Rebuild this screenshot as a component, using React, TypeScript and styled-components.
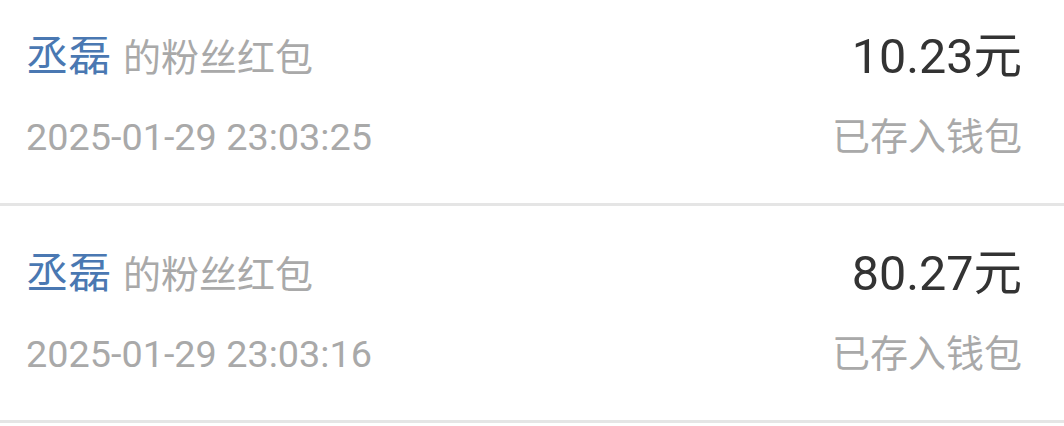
import React from "react";
import styled, { createGlobalStyle } from "styled-components";

const GlobalStyle = createGlobalStyle`
  html, body { margin: 0; padding: 0; background: #ffffff; overflow: hidden; }
  body { font-family: Roboto, "Noto Sans CJK SC", sans-serif; }
`;

const Viewport = styled.div`
  width: 1064px;
  height: 426px;
  overflow: hidden;
  background: #ffffff;
`;

const List = styled.div`
  display: flex;
  flex-direction: column;
  margin-top: -11px;
`;

const Row = styled.div`
  display: flex;
  justify-content: space-between;
  box-sizing: border-box;
  height: 217px;
  padding: 38px 42px 0 26px;
  border-bottom: 3px solid #e5e5e5;
`;

const Column = styled.div<{ $align: "left" | "right" }>`
  display: flex;
  flex-direction: column;
  align-items: ${(p) => (p.$align === "left" ? "flex-start" : "flex-end")};
`;

const TopLine = styled.div`
  display: flex;
  align-items: baseline;
  height: 60px;
  line-height: 60px;
  white-space: nowrap;
`;

const BottomLine = styled.div`
  margin-top: 25px;
  height: 50px;
  line-height: 50px;
  white-space: nowrap;
`;

const Name = styled.span`
  font-size: 42.5px;
  color: #4a78b2;
`;

const Suffix = styled.span`
  font-size: 38px;
  color: #a9a9a9;
  margin-left: 12px;
`;

const Amount = styled.span`
  font-size: 48.5px;
  color: #333333;
`;

const DateText = styled.span`
  font-size: 37.8px;
  color: #a9a9a9;
`;

const Status = styled.span`
  font-size: 38px;
  color: #a9a9a9;
`;

const items = [
  { name: "丞磊", amount: "10.23元", time: "2025-01-29 23:03:25" },
  { name: "丞磊", amount: "80.27元", time: "2025-01-29 23:03:16" },
];

export default function App() {
  return (
    <Viewport>
      <GlobalStyle />
      <List>
        {items.map((it, i) => (
          <Row key={i}>
            <Column $align="left">
              <TopLine>
                <Name>{it.name}</Name>
                <Suffix>的粉丝红包</Suffix>
              </TopLine>
              <BottomLine>
                <DateText>{it.time}</DateText>
              </BottomLine>
            </Column>
            <Column $align="right">
              <TopLine>
                <Amount>{it.amount}</Amount>
              </TopLine>
              <BottomLine>
                <Status>已存入钱包</Status>
              </BottomLine>
            </Column>
          </Row>
        ))}
      </List>
    </Viewport>
  );
}
